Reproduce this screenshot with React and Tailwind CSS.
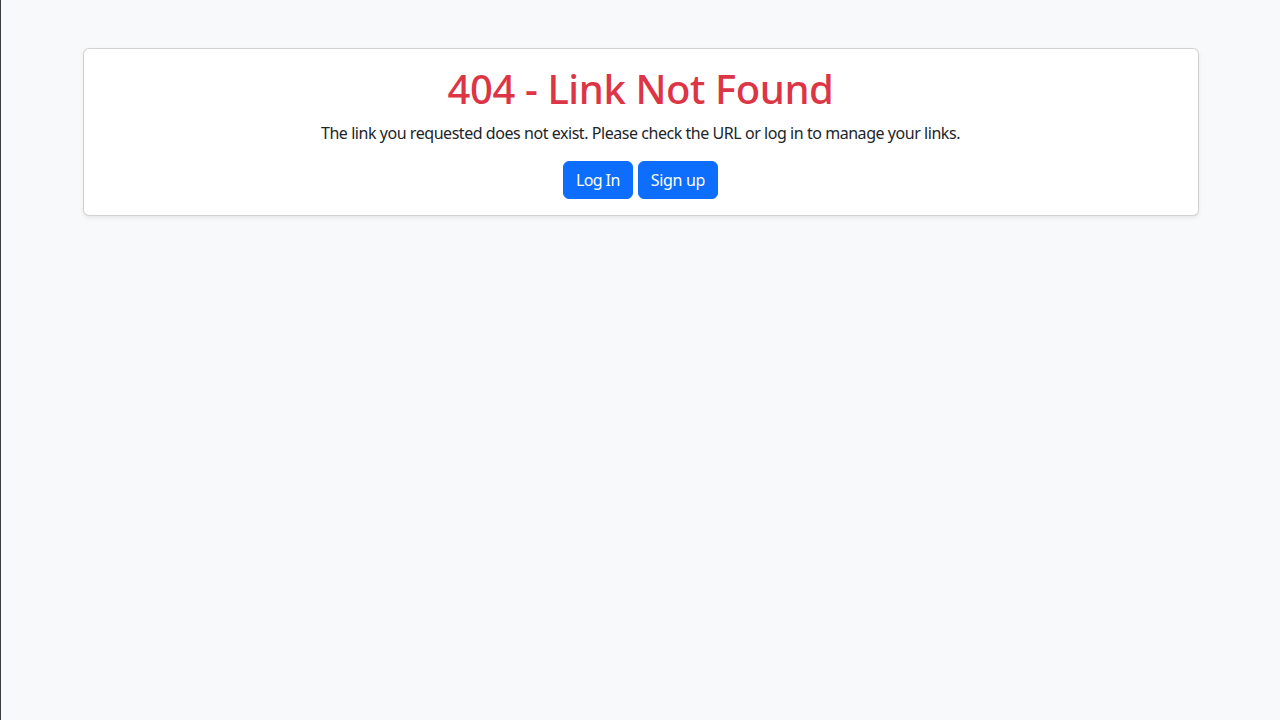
export default function App() {
  return (
    <div className="flex min-h-screen bg-[#f8f9fa] font-['Noto_Sans',sans-serif] text-[#212529]">
      {/* window edge seen at the far left of the shot */}
      <div className="w-px shrink-0 bg-[#3a3d41]" />

      <div className="flex-1">
        <div className="mx-auto max-w-[1140px] px-3">
          <div className="mt-12 rounded-md border border-black/[0.175] bg-white shadow-[0_2px_4px_rgba(0,0,0,0.075)]">
            <div className="p-4 text-center">
              <h1 className="mb-2 text-[40px] font-medium leading-[48px] tracking-[-0.4px] text-[#dc3545]">
                404 - Link Not Found
              </h1>
              <p className="mb-4 text-base leading-6 tracking-[-0.45px]">
                The link you requested does not exist. Please check the URL or log in to manage your links.
              </p>
              <div className="flex justify-center gap-[5px]">
                <button className="rounded-md border border-[#0d6efd] bg-[#0d6efd] px-3 py-1.5 text-base leading-6 tracking-[-0.6px] text-white hover:bg-[#0b5ed7]">
                  Log In
                </button>
                <button className="rounded-md border border-[#0d6efd] bg-[#0d6efd] px-3 py-1.5 text-base leading-6 tracking-[-0.3px] text-white hover:bg-[#0b5ed7]">
                  Sign up
                </button>
              </div>
            </div>
          </div>
        </div>
      </div>
    </div>
  );
}
